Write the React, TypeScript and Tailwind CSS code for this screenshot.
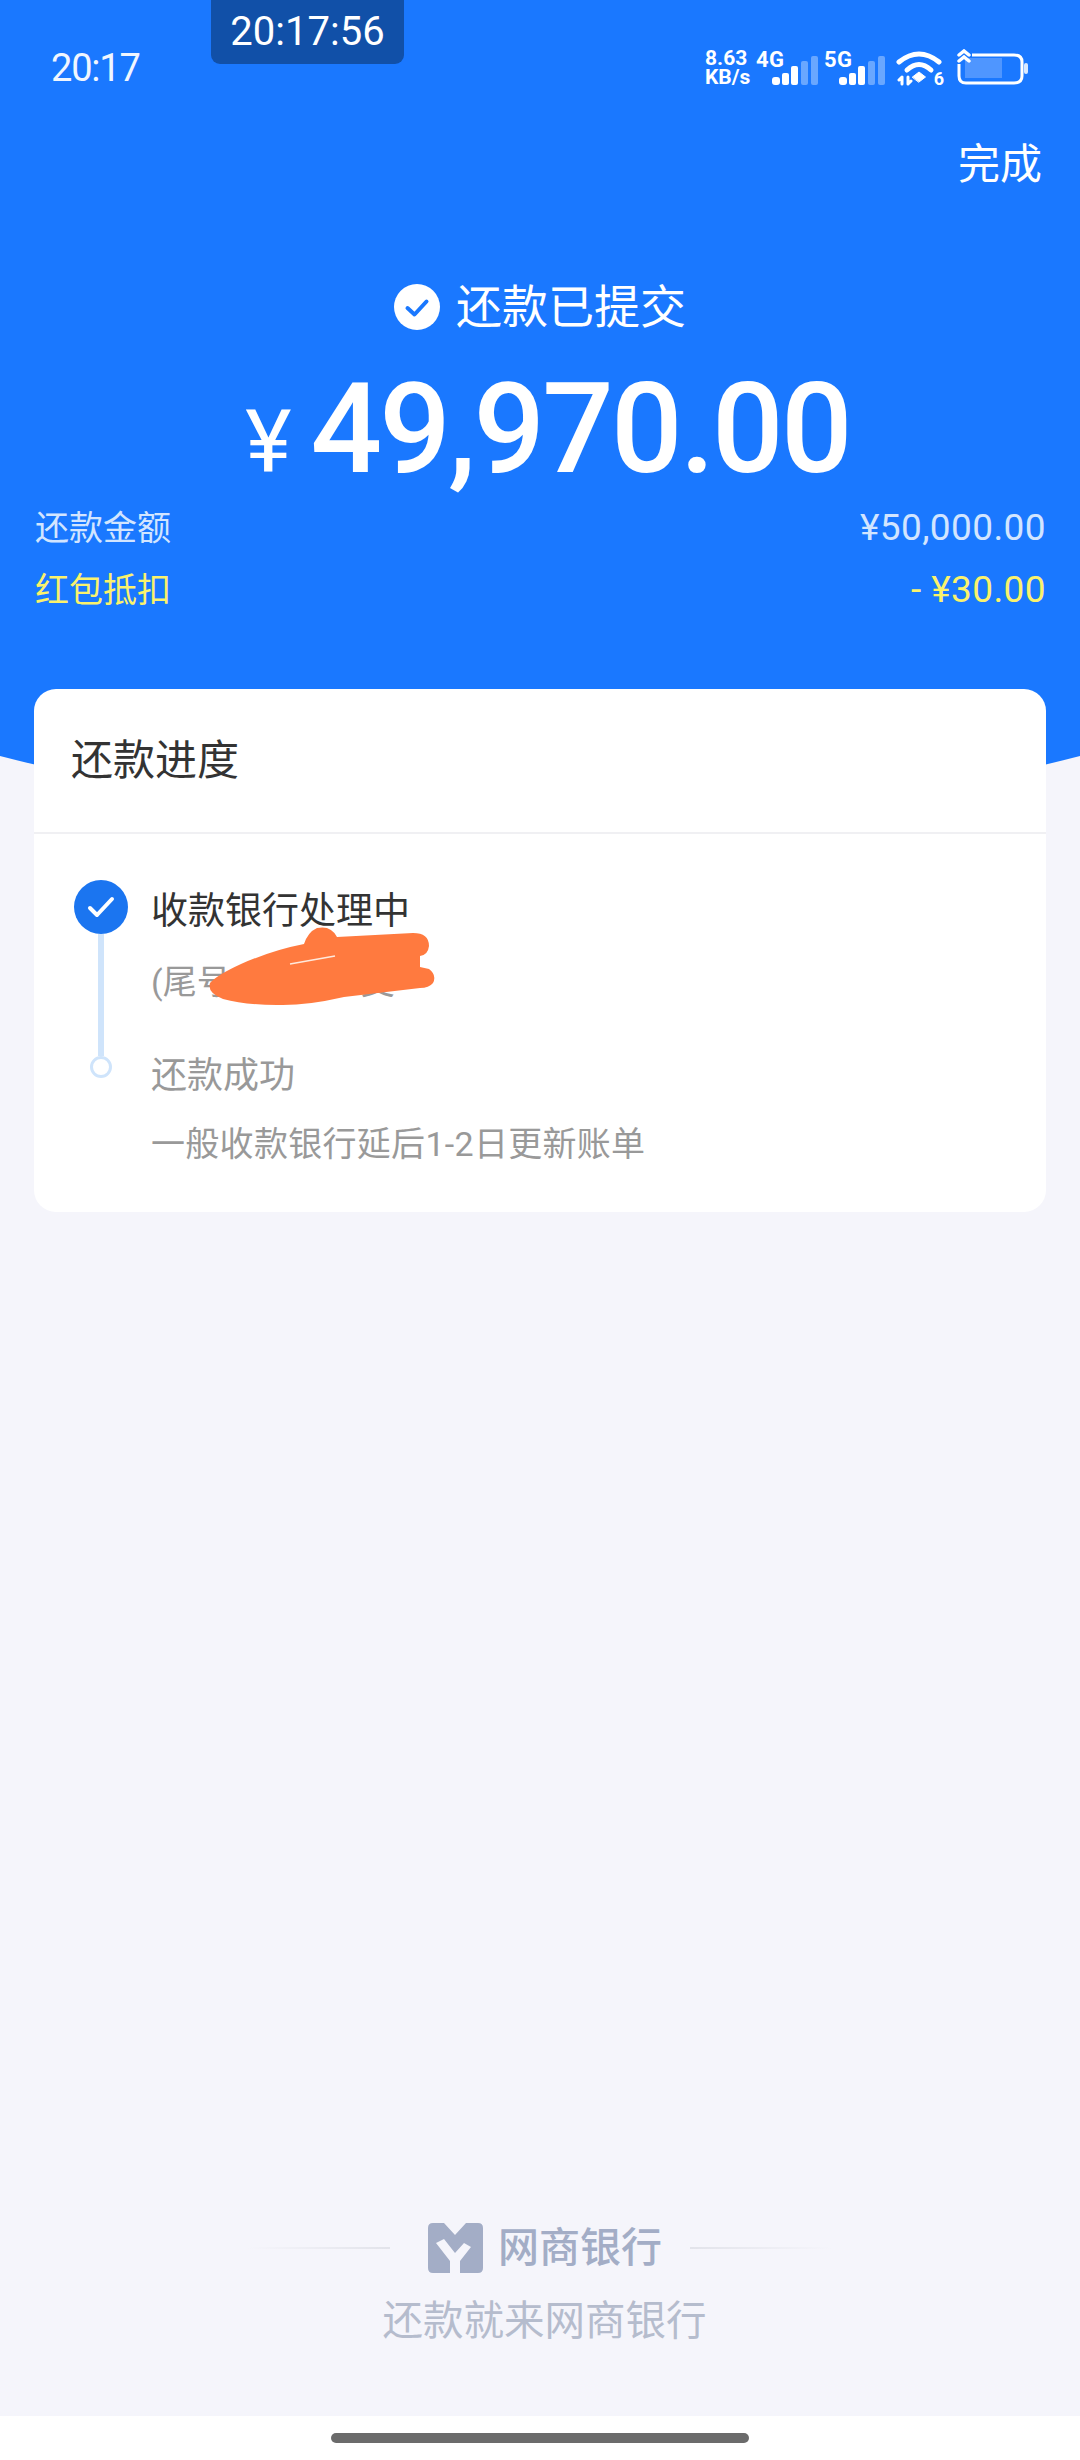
import React from "react";

function Bars() {
  return (
    <svg width="46" height="30" viewBox="0 0 46 30" className="absolute right-0 bottom-0" fill="#fff">
      <rect x="0" y="21" width="8" height="8" rx="3" />
      <rect x="10" y="17" width="7" height="12" rx="2" />
      <rect x="19" y="10" width="7" height="19" rx="2" />
      <rect x="29" y="5" width="7" height="24" rx="2" opacity="0.35" />
      <rect x="39" y="0" width="7" height="29" rx="2" opacity="0.35" />
    </svg>
  );
}

function Signal({ label, className }: { label: string; className: string }) {
  return (
    <div className={"relative h-[36px] " + className}>
      <span className="absolute left-0 top-[-1px] text-[22px] leading-[21px] font-bold tracking-[0.5px] text-white">{label}</span>
      <Bars />
    </div>
  );
}

function Wifi() {
  return (
    <div className="relative w-[48px] h-[36px] ml-[11px]">
      <svg width="48" height="36" viewBox="0 0 48 36" fill="none" stroke="#fff" strokeLinecap="round">
        <path d="M3 12 Q23 -4 43 12" strokeWidth="5" />
        <path d="M11 20 Q23 9 35 20" strokeWidth="5" />
        <path d="M16.500 27 L23 22 L29.500 27 L23 32 Z" fill="#fff" stroke="#fff" strokeWidth="1" />
        <path d="M6 27 V34 M6 27 L3 30 M12 27 V34 M12 34 L15 31" strokeWidth="3" />
      </svg>
      <span className="absolute right-0 bottom-[-2px] text-[18px] leading-[18px] font-bold text-white">6</span>
    </div>
  );
}

function Battery() {
  return (
    <svg width="72" height="38" viewBox="0 0 72 38" fill="none" className="ml-[13px]">
      <rect x="8" y="9" width="37" height="20" fill="#4f96ff" />
      <path d="M2 15 V27 Q2 34 9 34 H57 Q65 34 65 27 V13 Q65 6 57 6 H15" stroke="#fff" strokeWidth="3" />
      <rect x="67" y="14" width="4" height="11" rx="2" fill="#d9e9ff" />
      <path d="M2 6 L7 2 L12 6 M2 12 L7 8 L12 12" stroke="#fff" strokeWidth="3.500" strokeLinecap="round" />
    </svg>
  );
}

function CheckBadge() {
  return (
    <svg width="46" height="46" viewBox="0 0 46 46">
      <circle cx="23" cy="23" r="23" fill="#fff" />
      <path d="M13.500 24 L20.500 30.500 L32.500 17.500" fill="none" stroke="#1a78ff" strokeWidth="4" strokeLinecap="round" strokeLinejoin="round" />
    </svg>
  );
}

function Logo() {
  return (
    <svg width="55" height="50" viewBox="0 0 55 50">
      <path
        fillRule="evenodd"
        fill="#a3adc6"
        d="M5 0 H16 L27 12 L38 0 H50 Q55 0 55 5 V45 Q55 50 50 50 H32 V38 L43 24 L36 20 L27 30 L16 16 L8 20 L22 38 V50 H5 Q0 50 0 45 V5 Q0 0 5 0 Z"
      />
    </svg>
  );
}

function FadeLine({ flip }: { flip?: boolean }) {
  return (
    <div
      className={
        "w-[142px] h-[2px] from-transparent to-[#e2e3ea] " + (flip ? "bg-gradient-to-l" : "bg-gradient-to-r")
      }
    />
  );
}

export default function App() {
  return (
    <div className="relative w-[1080px] h-[2460px] flex flex-col bg-[#f5f5fb] overflow-hidden font-['Roboto','Noto_Sans_CJK_SC',sans-serif]">
      <div className="absolute z-10 left-[211px] top-0 w-[193px] h-[64px] rounded-b-[9px] bg-[#1150a8] flex items-center justify-center text-[40px] leading-none text-white">
        20:17:56
      </div>

      <header className="h-[830px] shrink-0 bg-[#1a78ff] text-white [clip-path:path('M0_0H1080V756Q540_895_0_756Z')]">
        <div className="pt-[40px] h-[96px] flex items-center pl-[51px] pr-[51px]">
          <span className="text-[38px] leading-none tracking-[-1.2px] text-[#f0f6ff]">20:17</span>
          <div className="ml-auto flex items-center">
            <div className="flex flex-col w-[51px] text-[21px] leading-[19px] font-bold">
              <span>8.63</span>
              <span>KB/s</span>
            </div>
            <Signal label="4G" className="w-[62px]" />
            <Signal label="5G" className="w-[61px] ml-[6px]" />
            <Wifi />
            <Battery />
          </div>
        </div>

        <div className="mt-[39px] flex justify-end pr-[38px] text-[42px] leading-[60px]">完成</div>

        <div className="mt-[82px] h-[60px] flex items-center justify-center gap-[16px] text-[46px] leading-[60px]">
          <CheckBadge />
          <span>还款已提交</span>
        </div>

        <div className="mt-[27px] h-[130px] flex items-baseline justify-center gap-[19px] pl-[15px] leading-[130px]">
          <span className="text-[88px]">¥</span>
          <span className="text-[126px] font-medium tracking-[-2.8px]">49,970.00</span>
        </div>

        <div className="mt-[14px] h-[40px] pl-[35px] pr-[34px] flex items-center justify-between text-[34px] leading-[40px] text-[#d2e5ff]">
          <span>还款金额</span>
          <span className="text-[37px] tracking-[0.4px]">¥50,000.00</span>
        </div>
        <div className="mt-[22px] h-[40px] pl-[35px] pr-[34px] flex items-center justify-between text-[34px] leading-[40px] text-[#faf26c]">
          <span>红包抵扣</span>
          <span className="text-[37px] tracking-[0.4px]">- ¥30.00</span>
        </div>
      </header>

      <section className="relative mx-[34px] -mt-[141px] bg-white rounded-[22px]">
        <div className="h-[143px] flex items-center px-[37px] text-[42px] text-[#333333] leading-none">还款进度</div>
        <div className="h-[2px] bg-[#f0f0f3]" />
        <div className="flex pt-[46px] pb-[48px] pl-[40px]">
          <div className="w-[54px] flex flex-col items-center">
            <div className="w-[54px] h-[54px] rounded-full bg-[#1b75f0] flex items-center justify-center">
              <svg width="30" height="26" viewBox="0 0 30 26">
                <path d="M4 14 L11 21 L26 5" fill="none" stroke="#fff" strokeWidth="4" strokeLinecap="round" strokeLinejoin="round" />
              </svg>
            </div>
            <div className="w-[6px] h-[122px] bg-[#cfe4fb]" />
            <div className="w-[22px] h-[22px] rounded-full border-[3px] border-[#cfe4fb]" />
          </div>
          <div className="ml-[23px] flex flex-col">
            <div className="mt-[1px] text-[37px] leading-[62px] text-[#333333]">收款银行处理中</div>
            <div className="mt-[19px] text-[34px] leading-[40px] text-[#999999] flex">
              <span>(尾号</span>
              <span className="ml-[130px]">支</span>
            </div>
            <div className="mt-[52px] text-[36px] leading-[44px] text-[#999999]">还款成功</div>
            <div className="mt-[26px] text-[34px] leading-[40px] text-[#999999] tracking-[0.3px]">一般收款银行延后1-2日更新账单</div>
          </div>
        </div>
      </section>

      <svg className="absolute left-[205px] top-[925px]" width="235" height="85" viewBox="0 0 235 85">
        <path
          fill="#ff7a3f"
          d="M5 58 Q12 50 36 39 Q68 25 99 19 Q103 7 112 3 Q126 0 132 12 L208 8 Q224 8 224 21 Q223 30 215 31 L215 42 L224 44 Q232 50 228 58 Q224 63 215 63 L139 72 Q100 81 72 80 Q40 80 18 74 Q2 68 5 58 Z"
        />
        <path d="M85 39 L130 31" stroke="#ffe9dc" strokeWidth="1.500" />
      </svg>

      <div className="flex-1" />

      <footer className="flex flex-col items-center pb-[70px]">
        <div className="h-[50px] flex items-center">
          <FadeLine />
          <div className="ml-[38px] flex items-center gap-[15px]">
            <Logo />
            <span className="text-[41px] leading-[50px] font-medium text-[#a3adc6] w-[164px] whitespace-nowrap">网商银行</span>
          </div>
          <div className="ml-[28px]">
            <FadeLine flip />
          </div>
        </div>
        <div className="mt-[23px] pl-[9px] text-[40.5px] leading-[50px] text-[#b5bccd]">还款就来网商银行</div>
      </footer>

      <div className="h-[44px] shrink-0 bg-white flex justify-center pt-[17px]">
        <div className="w-[418px] h-[10px] rounded-full bg-[#6b6b6b]" />
      </div>
    </div>
  );
}
